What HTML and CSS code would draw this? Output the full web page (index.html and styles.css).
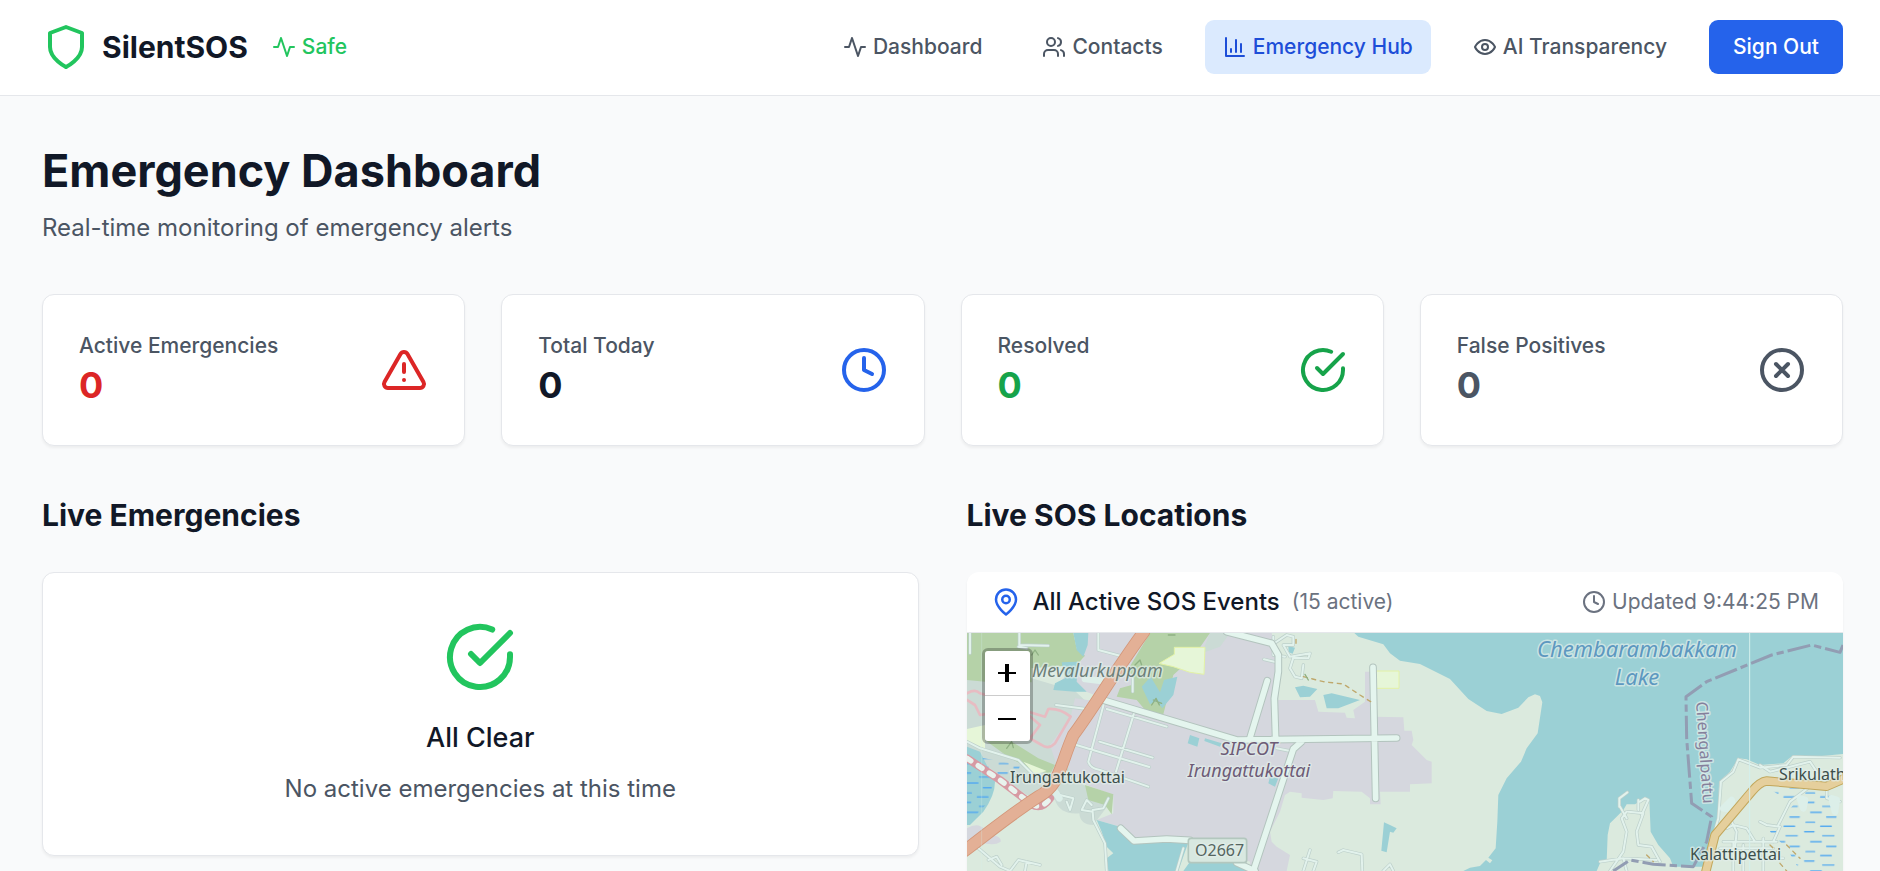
FILE: index.html
```html
<!DOCTYPE html>
<html lang="en">
<head>
  <meta charset="UTF-8">
  <meta name="viewport" content="width=device-width, initial-scale=1.0">
  <title>SilentSOS</title>
  <link rel="stylesheet" href="styles.css">
</head>
<body>

  <header class="header">
    <div class="brand">
      <svg class="icon icon-xl green" viewBox="0 0 24 24"><path d="M12 22s8-4 8-10V5l-8-3-8 3v7c0 6 8 10 8 10"/></svg>
      <span class="brand-name">SilentSOS</span>
      <span class="status green">
        <svg class="icon" viewBox="0 0 24 24"><path d="M22 12h-4l-3 9L9 3l-3 9H2"/></svg>
        Safe
      </span>
    </div>
    <nav class="nav">
      <a class="nav-link" href="#">
        <svg class="icon" viewBox="0 0 24 24"><path d="M22 12h-4l-3 9L9 3l-3 9H2"/></svg>
        Dashboard
      </a>
      <a class="nav-link" href="#">
        <svg class="icon" viewBox="0 0 24 24"><path d="M16 21v-2a4 4 0 0 0-4-4H6a4 4 0 0 0-4 4v2"/><circle cx="9" cy="7" r="4"/><path d="M22 21v-2a4 4 0 0 0-3-3.87M16 3.13a4 4 0 0 1 0 7.75"/></svg>
        Contacts
      </a>
      <a class="nav-link active" href="#">
        <svg class="icon" viewBox="0 0 24 24"><path d="M3 3v18h18M18 17V9M13 17V5M8 17v-3"/></svg>
        Emergency Hub
      </a>
      <a class="nav-link" href="#">
        <svg class="icon" viewBox="0 0 24 24"><path d="M2 12s3-7 10-7 10 7 10 7-3 7-10 7-10-7-10-7Z"/><circle cx="12" cy="12" r="3"/></svg>
        AI Transparency
      </a>
      <button class="btn" type="button">Sign Out</button>
    </nav>
  </header>

  <main class="main">
    <h1>Emergency Dashboard</h1>
    <p class="subtitle">Real-time monitoring of emergency alerts</p>

    <section class="stats">
      <div class="card stat">
        <div>
          <div class="stat-label">Active Emergencies</div>
          <div class="stat-value red">0</div>
        </div>
        <svg class="icon icon-xl red" viewBox="0 0 24 24"><path d="m21.73 18-8-14a2 2 0 0 0-3.48 0l-8 14A2 2 0 0 0 4 21h16a2 2 0 0 0 1.73-3ZM12 9v4M12 17h.01"/></svg>
      </div>
      <div class="card stat">
        <div>
          <div class="stat-label">Total Today</div>
          <div class="stat-value">0</div>
        </div>
        <svg class="icon icon-xl blue" viewBox="0 0 24 24"><circle cx="12" cy="12" r="10"/><path d="M12 6v6l4 2"/></svg>
      </div>
      <div class="card stat">
        <div>
          <div class="stat-label">Resolved</div>
          <div class="stat-value dark-green">0</div>
        </div>
        <svg class="icon icon-xl dark-green" viewBox="0 0 24 24"><path d="M22 11.08V12a10 10 0 1 1-5.93-9.14"/><path d="m9 11 3 3L22 4"/></svg>
      </div>
      <div class="card stat">
        <div>
          <div class="stat-label">False Positives</div>
          <div class="stat-value gray">0</div>
        </div>
        <svg class="icon icon-xl gray" viewBox="0 0 24 24"><circle cx="12" cy="12" r="10"/><path d="m15 9-6 6M9 9l6 6"/></svg>
      </div>
    </section>

    <div class="columns">
      <section>
        <h2>Live Emergencies</h2>
        <div class="card empty">
          <svg class="icon icon-huge green" viewBox="0 0 24 24"><path d="M22 11.08V12a10 10 0 1 1-5.93-9.14"/><path d="m9 11 3 3L22 4"/></svg>
          <h3>All Clear</h3>
          <p>No active emergencies at this time</p>
        </div>
      </section>

      <section>
        <h2>Live SOS Locations</h2>
        <div class="map-card">
          <div class="map-header">
            <svg class="icon icon-lg blue" viewBox="0 0 24 24"><path d="M20 10c0 6-8 12-8 12s-8-6-8-12a8 8 0 0 1 16 0Z"/><circle cx="12" cy="10" r="3"/></svg>
            <h3>All Active SOS Events</h3>
            <span class="count">(15 active)</span>
            <span class="updated">
              <svg class="icon" viewBox="0 0 24 24"><circle cx="12" cy="12" r="10"/><path d="M12 6v6l4 2"/></svg>
              Updated 9:44:25 PM
            </span>
          </div>
          <div class="map">
            <svg class="map-canvas">
              <defs>
                <pattern id="marsh" width="110" height="88" patternUnits="userSpaceOnUse">
                  <path class="marsh-line" d="M4 8h28M58 20h34M22 38h32M70 52h28M8 68h26M52 80h32"/>
                </pattern>
              </defs>
              <!-- terrain is drawn at three units per pixel -->
              <g transform="translate(-7 -68) scale(.33333)">
                <path class="industry" d="M375 204H935L955 290V405H1065L1075 440L1155 443L1160 458L1185 460L1180 435L1215 410V320H1240V455L1330 457L1333 497H1355L1360 525L1355 540L1400 585L1415 590V655L1350 658V680H1260L1262 718H1230V700L1205 680L1120 678L1118 700L1090 705L1025 698V685L990 680L975 690L960 740L930 800L935 830L950 845L990 870L980 918H870V890L690 820L520 830L480 785L410 765L460 745V690L380 660L300 600L340 510L430 400L300 350L370 280Z"/>
                <path class="town" d="M21 345L215 340L345 378L400 430L320 600L350 650L460 700L400 780Q360 780 358 745Q300 750 285 705L200 690L21 560Z"/>
                <path class="industry" d="M345 400L420 410L335 510L290 600L270 540L332 455Z"/>
                <path class="town" d="M750 204H810L780 245L725 265Z"/>
                <path class="industry" d="M21 790Q55 770 75 795L80 810Q125 810 122 830Q100 845 60 830L21 860Z"/>
                <path class="forest" d="M21 204H340L350 250L375 272L350 300L215 310V352L75 350L21 345ZM570 204H750L725 240L700 275L640 330L610 448L560 440L530 405L470 395L480 370L515 360L520 330L500 320ZM75 525L155 530L235 580L285 600L270 628L215 612L150 580ZM375 660L460 688L455 748L435 720L385 705Z"/>
                <path class="water" d="M340 204H385L383 240L370 275L350 255ZM305 292L355 290L350 350L380 380L345 380L280 375L285 355L315 340ZM545 365L572 335L600 382L612 345L652 335L640 390L607 430L590 408L570 418ZM410 765L480 785L520 830L690 820L675 860L655 918H445L440 880L460 865L440 845L425 800ZM690 890H845L880 918H670ZM690 510L718 520L712 545L683 535ZM735 520L785 535L780 545L733 528ZM1005 367L1030 362L1072 372L1050 395L1020 397ZM1090 390L1115 385L1200 405L1135 430L1100 430ZM1272 772L1290 780L1310 790L1300 803L1290 800L1280 862L1264 857ZM930 635L955 640L945 665L925 655ZM985 243L1005 248L998 266L986 262Z"/>
                <path class="water" d="M21 545L60 560L105 650Q105 690 70 740L30 780H21Z"/>
                <path class="meadow" d="M598 295L643 268V247H735L732 328L690 322L640 305ZM1250 318H1317V370H1250Z"/>
                <path class="field" d="M21 492L75 480V550L130 575L60 555L21 530ZM190 590L260 618L225 628Z"/>
                <path class="water" d="M1183 204L1195 215L1270 238L1290 265L1320 287L1380 297L1470 342L1525 402L1580 438L1625 447L1675 428L1705 397L1725 388L1740 393L1747 412L1733 505L1700 550L1683 590L1640 640L1615 690L1612 770L1607 850L1585 878L1597 886L1590 895L1578 885L1560 903L1530 908L1510 918H1910L1920 895L1940 888L1943 810L1950 775L1970 755L1990 735L2000 718H2025L2055 700L2068 705L2072 800L2095 840L2130 880L2140 905H2235L2262 850L2275 760L2277 650L2310 620L2335 580L2360 583L2400 600L2470 595L2500 570L2560 575L2649 567V204Z"/>
                <path class="marsh" d="M2420 665L2640 675V918H2520L2480 850L2430 800L2500 720Z"/>
                <path class="marsh" d="M21 570L180 600L170 640L95 650V700L40 760H21Z"/>

                <!-- field outlines -->
                <path class="track-pink" d="M21 385Q45 370 60 385L110 400L120 440L60 450L45 420L21 405M205 440L255 455L265 432Q300 430 332 455L285 535Q265 555 245 540L210 520L240 480L205 450"/>

                <!-- minor streets -->
                <g class="lane-case">
                  <g id="streets">
                    <path d="M30 204V265M178 204V240L265 242M175 245L200 250M415 204V255L480 272M288 420L380 432M518 340V380M432 415L385 590Q390 610 420 615L565 665M440 432L620 485M522 445L468 620M418 530L578 578M342 538L568 606M912 283L950 292M21 530L60 550L175 585L215 625M400 765L435 835L440 918M400 765L398 740L365 735L380 705L395 720M398 735L430 730L445 700M300 690L340 700L330 735L320 710M310 600L330 640M55 850L120 905L150 918M85 885L110 875L125 900M150 918L175 885L240 900M200 890L195 918M1135 862L1150 855L1205 868L1207 918M1050 855L1030 918M1030 880L1070 890L1060 918M1270 918L1290 898L1300 918M670 850L650 918M950 550L990 558"/>
                    <path d="M935 240L980 210L1000 215V240L970 240L990 275L1050 265L1045 280L1000 278L990 310L1005 335L1025 340L1030 300M940 215V270L975 275"/>
                    <path d="M2000 740L1985 760L2000 800L1990 860L1950 918M1978 725V700L2002 682M1980 725L2000 760M2005 740L2050 745L2030 800L2035 840L2075 845L2100 890M2035 705V735M2045 750L2065 705L2055 700L2040 710M2250 850L2275 760L2283 650L2320 620L2335 583L2400 608L2480 600L2500 575L2640 578M2310 760L2330 800L2325 850M2300 790L2320 780L2360 790L2385 830M2290 830H2450M2280 850H2440M2320 830V918M2350 840V918M2410 820V918M2400 880H2470M2440 830L2460 785L2420 780L2400 770M2400 600L2430 620L2550 590L2570 620M2455 780L2490 710L2550 665M2600 670V700L2640 710M1920 890L1990 880L2000 918M1990 880L2090 885"/>
                  </g>
                </g>
                <use class="lane" href="#streets"/>
                <path class="town-block" d="M2290 730L2315 705L2320 735ZM2520 700L2535 705L2530 730ZM2615 700L2630 705L2625 740ZM285 680L298 700M375 342L425 348"/>

                <!-- main roads -->
                <path class="road-case" d="M800 200L935 235L955 270V320L943 400L947 525M432 406L830 525L1310 519M922 347L868 525M1025 530L1000 552L880 918M1239 307L1247 700M482 790L522 828L620 822L690 826M830 893L885 918"/>
                <path class="road" d="M800 200L935 235L955 270V320L943 400L947 525M432 406L830 525L1310 519M922 347L868 525M1025 530L1000 552L880 918M1239 307L1247 700M482 790L522 828L620 822L690 826M830 893L885 918"/>
                <path class="road-pink" d="M21 580L120 645L215 718Q245 735 270 700"/>
                <path class="road-dash" d="M21 580L120 645L215 718Q245 735 270 700"/>
                <path class="highway-case" d="M552 200C470 310 400 430 340 510C300 600 300 660 235 695C150 750 90 800 10 860"/>
                <path class="highway" d="M552 200C470 310 400 430 340 510C300 600 300 660 235 695C150 750 90 800 10 860"/>
                <path class="primary-case" d="M2655 640L2600 664L2420 648Q2400 650 2375 680L2265 810L2235 930"/>
                <path class="primary" d="M2655 640L2600 664L2420 648Q2400 650 2375 680L2265 810L2235 930"/>
                <path class="footpath" d="M1030 335L1090 350L1150 357L1200 390L1232 410M1008 235V215M2430 840L2450 860M2480 840L2520 880M2460 895L2480 918M2060 870L2080 890"/>
                <path class="footpath-mark" d="M1035 328L1045 345M215 270L225 255L235 270M525 300L540 285L545 300M575 420L588 400L598 420M580 405L605 415M140 550L155 530L160 548M625 210H645"/>

                <!-- district boundary -->
                <path class="boundary" d="M2649 240L2640 262L2555 240L2435 270L2240 350L2178 395L2180 520L2195 715L2255 755L2240 830L2200 905L2080 898L2010 885L1960 918"/>
                <path class="tile-edge" d="M2369 204V918"/>
                <path class="tile-edge faint" d="M65 204V918"/>
                <rect class="shield" x="685" y="820" width="175" height="73" rx="8"/>
              </g>

              <g class="labels">
                <text class="suburb" x="65" y="44">Mevalurkuppam</text>
                <text class="village" x="43" y="150">Irungattukottai</text>
                <text class="estate" x="282" y="122">SIPCOT</text>
                <text class="estate" x="282" y="144">Irungattukottai</text>
                <text class="ref" x="228" y="223">O2667</text>
                <text class="lake" x="670" y="24">Chembarambakkam</text>
                <text class="lake" x="670" y="52">Lake</text>
                <text class="district" transform="translate(729 69) rotate(86)">Chengalpattu</text>
                <text class="village" x="812" y="147">Srikulath</text>
                <text class="village" x="723" y="227">Kalattipettai</text>
              </g>
            </svg>
            <div class="zoom-control">
              <button type="button" aria-label="Zoom in"><svg viewBox="0 0 18 18"><path class="thin" d="M0 9h18"/><path class="thick" d="M9 0v18"/></svg></button>
              <button type="button" aria-label="Zoom out"><svg viewBox="0 0 18 18"><path class="thin" d="M0 9h18"/></svg></button>
            </div>
          </div>
        </div>
      </section>
    </div>
  </main>

</body>
</html>
```
FILE: styles.css
```css
* {
  box-sizing: border-box;
}

body {
  margin: 0;
  font: 24px/36px Inter, sans-serif;
  color: #111827;
  background: #f9fafb;
}

h1,
h2,
h3,
p {
  margin: 0;
}

.icon {
  flex: none;
  width: 24px;
  height: 24px;
  fill: none;
  stroke: currentColor;
  stroke-width: 2;
  stroke-linecap: round;
  stroke-linejoin: round;
}

.icon-lg {
  width: 30px;
  height: 30px;
}

.icon-xl {
  width: 48px;
  height: 48px;
}

.icon-huge {
  width: 72px;
  height: 72px;
}

.green {
  color: #22c55e;
}

.dark-green {
  color: #16a34a;
}

.red {
  color: #dc2626;
}

.blue {
  color: #2563eb;
}

.gray {
  color: #4b5563;
}

.header {
  display: flex;
  align-items: center;
  justify-content: space-between;
  padding: 20px 37px 21px 42px;
  border-bottom: 1px solid #e5e7eb;
  background: #fff;
}

.brand {
  display: flex;
  align-items: center;
}

.brand-name {
  margin: 0 24px 0 12px;
  font-size: 30px;
  font-weight: 700;
}

.status {
  display: flex;
  align-items: center;
  gap: 6px;
  font-size: 21px;
  font-weight: 500;
}

.nav {
  display: flex;
  align-items: center;
  gap: 24px;
}

.nav-link {
  display: flex;
  align-items: center;
  gap: 6px;
  padding: 12px 18px;
  font-size: 21px;
  font-weight: 500;
  line-height: 30px;
  color: #4b5563;
  text-decoration: none;
  border-radius: 9px;
}

.nav-link.active {
  color: #1d4ed8;
  background: #dbeafe;
}

.btn {
  padding: 12px 24px;
  font: inherit;
  font-size: 21px;
  font-weight: 500;
  line-height: 30px;
  border: 0;
  color: #fff;
  background: #2563eb;
  border-radius: 9px;
  cursor: pointer;
}

.main {
  padding: 48px 37px 0 42px;
}

h1 {
  font-size: 45px;
  line-height: 54px;
}

h2 {
  margin-bottom: 36px;
  font-size: 30px;
  line-height: 42px;
}

h3 {
  font-weight: 500;
}

.subtitle {
  margin-top: 12px;
  color: #4b5563;
}

.card {
  border: 1px solid #e5e7eb;
  background: #fff;
  border-radius: 12px;
  box-shadow: 0 2px 3px rgba(0, 0, 0, 0.05);
}

.stats {
  display: grid;
  grid-template-columns: repeat(4, 1fr);
  gap: 36px;
  margin: 48px 0;
}

.stat {
  display: flex;
  align-items: center;
  justify-content: space-between;
  padding: 36px;
}

.stat-label {
  font-size: 21px;
  font-weight: 500;
  line-height: 30px;
  color: #4b5563;
}

.stat-value {
  font-size: 36px;
  font-weight: 700;
  line-height: 48px;
}

.columns {
  display: grid;
  grid-template-columns: 1fr 1fr;
  align-items: start;
  gap: 48px;
}

.empty {
  display: flex;
  flex-direction: column;
  align-items: center;
  padding: 48px;
}

.empty h3 {
  margin: 24px 0 12px;
  font-size: 27px;
  line-height: 42px;
}

.empty p {
  color: #4b5563;
}

.map-card {
  overflow: hidden;
  background: #fff;
  border-radius: 12px 12px 0 0;
  box-shadow: 0 2px 3px rgba(0, 0, 0, 0.05);
}

.map-header {
  display: flex;
  align-items: center;
  gap: 12px;
  padding: 12px 24px;
  border-bottom: 1px solid #e5e7eb;
}

.map-header h3 {
  font-size: 24px;
}

.count,
.updated {
  font-size: 21px;
  color: #6b7280;
}

.updated {
  display: flex;
  align-items: center;
  gap: 6px;
  margin-left: auto;
}

/* map fills what is left of the window */

.map {
  position: relative;
  height: calc(100vh - 633px);
  min-height: 200px;
  background: #dbeade;
}

.map-canvas {
  display: block;
  width: 100%;
  height: 100%;
}

.map-canvas path {
  fill: none;
  stroke-linejoin: round;
  stroke-linecap: round;
}

.map-canvas .industry { fill: #d5d7de; }
.map-canvas .town { fill: #cbdbd5; }
.map-canvas .forest { fill: #b5d2a8; }
.map-canvas .water { fill: #9bd0d5; }
.map-canvas .field { fill: #e6f6d8; }
.map-canvas .meadow { fill: #e6f6d8; stroke: #e3f2a6; stroke-width: 3; }
.map-canvas .marsh { fill: url(#marsh); }
.map-canvas .marsh-line { stroke: #55aaf0; stroke-width: 4; }

.lane-case { stroke: #bccfca; stroke-width: 10; }
.lane { stroke: #e2f2ec; stroke-width: 6; }
.road-case { stroke: #b3c4be; stroke-width: 23; }
.road { stroke: #e4f5ee; stroke-width: 17; }
.highway-case { stroke: #d3977a; stroke-width: 38; }
.highway { stroke: #e3b096; stroke-width: 33; }
.primary-case { stroke: #c2a75c; stroke-width: 28; }
.primary { stroke: #e5cf9c; stroke-width: 22; }
.road-pink { stroke: #d79aa3; stroke-width: 24; }
.road-dash { stroke: #e9f3ee; stroke-width: 16; stroke-dasharray: 14 26; }
.track-pink { stroke: #e7bcc2; stroke-width: 8; }
.town-block { stroke: #dcefe9; stroke-width: 20; }
.footpath { stroke: #bfa86c; stroke-width: 4; stroke-dasharray: 12 14; }
.footpath-mark { stroke: #8fb184; stroke-width: 4; }
.boundary { stroke: #929db3; stroke-width: 9; stroke-dasharray: 70 12 22 12; }
.map-canvas .boundary { stroke-linecap: butt; }
.tile-edge { stroke: #d5f0ee; stroke-width: 3; }
.faint { opacity: 0.3; }
.shield { fill: #d8e8e0; stroke: #b3c7be; stroke-width: 5; }

.labels {
  font-family: "Noto Sans", sans-serif;
  font-size: 16px;
  stroke: rgba(226, 238, 234, 0.7);
  stroke-width: 3px;
  stroke-linejoin: round;
  paint-order: stroke;
}

.suburb { font-size: 18px; font-style: italic; fill: #6c7f79; }
.village { fill: #3d4f4b; }
.estate { font-size: 18px; font-style: italic; text-anchor: middle; fill: #6d5b76; }
.ref { fill: #55655f; }
.lake { font-size: 22px; font-style: italic; text-anchor: middle; fill: #5d98c0; }
.district { fill: #857f9b; }

.zoom-control {
  position: absolute;
  top: 15px;
  left: 15px;
  border: 3px solid rgba(0, 0, 0, 0.25);
  border-radius: 6px;
  background-clip: padding-box;
}

.zoom-control button {
  display: flex;
  align-items: center;
  justify-content: center;
  width: 45px;
  height: 45px;
  padding: 0;
  border: 0;
  background: #fff;
  border-radius: 0 0 3px 3px;
  cursor: pointer;
}

.zoom-control button:first-child {
  border-bottom: 1px solid #ccc;
  border-radius: 3px 3px 0 0;
}

.zoom-control svg {
  width: 18px;
  height: 18px;
}

.zoom-control path {
  stroke: #000;
}

.zoom-control .thin { stroke-width: 2; }
.zoom-control .thick { stroke-width: 4; }
```
